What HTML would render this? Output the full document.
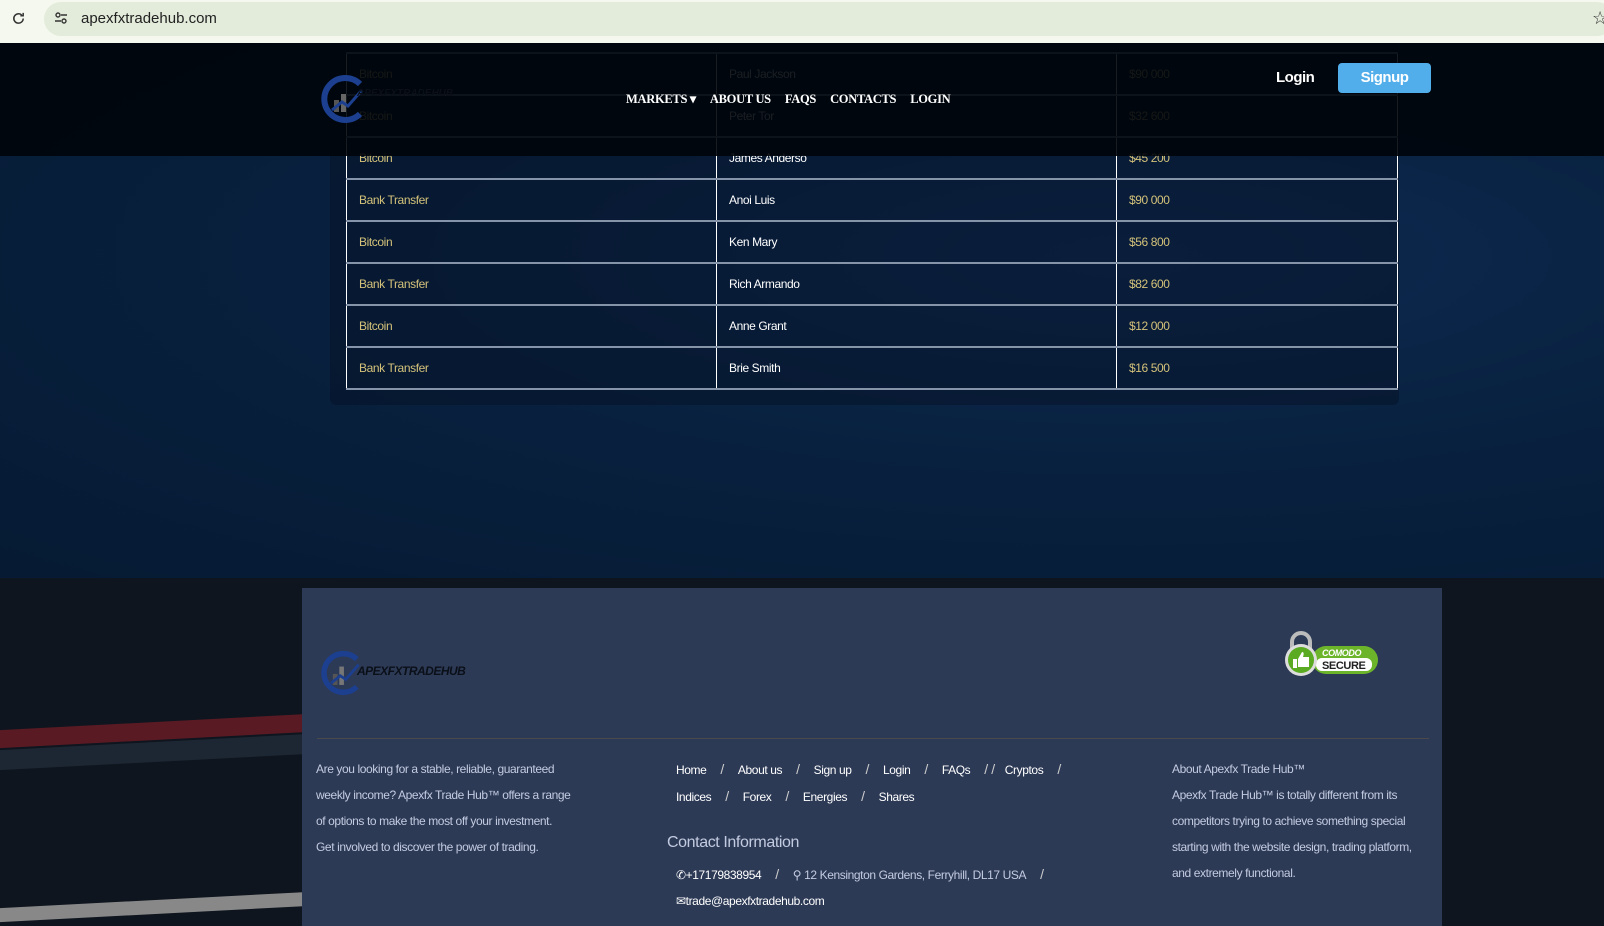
<!DOCTYPE html>
<html><head><meta charset="utf-8"><style>
*{margin:0;padding:0;box-sizing:border-box}
body{width:1604px;height:926px;overflow:hidden;position:relative;font-family:"Liberation Sans",sans-serif;background:#0b1220}
.bar{position:absolute;left:0;top:0;width:1604px;height:43px;background:#f5f8ee}
.pill{position:absolute;left:44px;top:2px;width:1570px;height:34px;background:#e3ecdb;border-radius:17px}
.url{position:absolute;left:81px;top:10px;font-size:15px;color:#222}
.hero{position:absolute;left:0;top:43px;width:1604px;height:535px;background:radial-gradient(ellipse at 70% 40%,#0e2a52 0%,#08213f 45%,#061a33 100%)}
.shadowbox{position:absolute;left:330px;top:43px;width:1069px;height:362px;background:rgba(5,18,38,.5);border-radius:6px}
table{position:absolute;left:346px;top:52px;width:1052px;border-collapse:collapse;font-size:12px;letter-spacing:-.4px}
td{height:42px;border-bottom:2px solid #8594a8;padding-left:12px;color:#fff}
td:first-child{color:#d4c27a;border-left:1px solid #fff;width:370px}
td:nth-child(2){border-left:1px solid #fff;width:400px}
td:nth-child(3){color:#d4c27a;border-left:1px solid #fff;border-right:1px solid #fff}
tr:first-child td{border-top:2px solid #8594a8}
.hdr{position:absolute;left:0;top:43px;width:1604px;height:113px;background:rgba(0,4,10,.9)}
.nav{position:absolute;top:91px;left:626px;font-family:"Liberation Serif",serif;font-weight:bold;font-size:12.5px;color:#fff;letter-spacing:-.3px}
.nav span{margin-right:14px}
.login{position:absolute;left:1276px;top:69px;color:#fff;font-size:15px;font-weight:bold;letter-spacing:-.5px}
.signup{position:absolute;left:1338px;top:63px;width:93px;height:30px;background:#52aeea;border-radius:4px;color:#fff;font-size:15px;font-weight:bold;text-align:center;line-height:30px;letter-spacing:-.5px}
.below{position:absolute;left:0;top:578px;width:1604px;height:348px;background:#0e151e}
.red{position:absolute;left:0;top:722px;width:310px;height:18px;background:#5a1a24;transform:skewY(-3deg)}
.grey{position:absolute;left:0;top:742px;width:310px;height:20px;background:#1d2733;transform:skewY(-3deg)}
.white{position:absolute;left:0;top:900px;width:310px;height:14px;background:#888;transform:skewY(-3deg)}
.foot{position:absolute;left:302px;top:588px;width:1140px;height:338px;background:#2d3a56;color:#c3cbe0;font-size:12px;letter-spacing:-.4px}
.hr{position:absolute;left:15px;top:150px;width:1112px;height:1px;background:#4a4a4a}
.p{position:absolute;line-height:26px}
.w{color:#fff}
.sl{margin:0 14px;color:#ccc;font-size:14px}
</style></head><body>
<div class="bar"><div class="pill"></div>
<svg style="position:absolute;left:11px;top:11px" width="15" height="15" viewBox="0 0 16 16"><path d="M13 8a5 5 0 1 1-1.5-3.6M13 2v3h-3" fill="none" stroke="#333" stroke-width="1.6"/></svg>
<svg style="position:absolute;left:54px;top:11px" width="14" height="14" viewBox="0 0 14 14"><circle cx="4" cy="4" r="2" fill="none" stroke="#333" stroke-width="1.4"/><path d="M7 4h6M1 10h6" stroke="#333" stroke-width="1.4"/><circle cx="10" cy="10" r="2" fill="none" stroke="#333" stroke-width="1.4"/></svg>
<div class="url">apexfxtradehub.com</div>
<div style="position:absolute;left:1592px;top:8px;font-size:18px;color:#333">☆</div></div>
<div class="hero"></div>
<div class="shadowbox"></div>
<table>
<tr><td>Bitcoin</td><td>Paul Jackson</td><td>$90 000</td></tr>
<tr><td>Bitcoin</td><td>Peter Tor</td><td>$32 600</td></tr>
<tr><td>Bitcoin</td><td>James Anderso</td><td>$45 200</td></tr>
<tr><td>Bank Transfer</td><td>Anoi Luis</td><td>$90 000</td></tr>
<tr><td>Bitcoin</td><td>Ken Mary</td><td>$56 800</td></tr>
<tr><td>Bank Transfer</td><td>Rich Armando</td><td>$82 600</td></tr>
<tr><td>Bitcoin</td><td>Anne Grant</td><td>$12 000</td></tr>
<tr><td>Bank Transfer</td><td>Brie Smith</td><td>$16 500</td></tr>
</table>
<div class="hdr"></div>
<svg style="position:absolute;left:320px;top:74px" width="50" height="50" viewBox="0 0 50 50"><path d="M40 10A21 21 0 1 0 40 40" fill="none" stroke="#1c3f8f" stroke-width="6"/><rect x="14" y="26" width="5" height="12" fill="#555"/><rect x="21" y="20" width="5" height="18" fill="#666"/><path d="M12 36l10-8 6 4 14-16" fill="none" stroke="#1c3f8f" stroke-width="3"/></svg>
<div style="position:absolute;left:357px;top:88px;font-size:10px;font-weight:bold;font-style:italic;color:#0a0f18">APEXFXTRADEHUB</div>
<div class="nav"><span>MARKETS ▾</span><span>ABOUT US</span><span>FAQS</span><span>CONTACTS</span><span>LOGIN</span></div>
<div class="login">Login</div>
<div class="signup">Signup</div>
<div class="below"></div>
<div class="red"></div><div class="grey"></div><div class="white"></div>
<div class="foot">
<svg style="position:absolute;left:18px;top:62px" width="46" height="46" viewBox="0 0 50 50"><path d="M40 10A21 21 0 1 0 40 40" fill="none" stroke="#1c3f8f" stroke-width="6"/><rect x="14" y="26" width="5" height="12" fill="#555"/><rect x="21" y="18" width="5" height="20" fill="#777"/><path d="M12 36l10-8 6 4 14-16" fill="none" stroke="#1c3f8f" stroke-width="3"/></svg>
<div style="position:absolute;left:55px;top:76px;font-size:12px;font-weight:bold;font-style:italic;color:#0a0f18;letter-spacing:-.5px">APEXFXTRADEHUB</div>
<svg style="position:absolute;left:980px;top:40px" width="100" height="56" viewBox="0 0 100 56"><path d="M10 22v-8a9 9 0 0 1 18 0v8" fill="none" stroke="#bbb" stroke-width="4"/><rect x="30" y="18" width="66" height="28" rx="14" fill="#6cb52a"/><rect x="34" y="30" width="56" height="13" rx="6" fill="#fff"/><text x="40" y="28" font-size="9" font-weight="bold" font-style="italic" fill="#fff" font-family="Liberation Sans">COMODO</text><text x="40" y="41" font-size="11" font-weight="bold" fill="#222" font-family="Liberation Sans">SECURE</text><circle cx="19" cy="32" r="16" fill="#ddd"/><circle cx="19" cy="32" r="13" fill="#5aab22"/><path d="M11 31h4v9h-4zM16 31l4-7c2 0 2 2 1 5h6v10h-11z" fill="#fff"/></svg>
<div class="hr"></div>
<div class="p" style="left:14px;top:168px;width:260px">Are you looking for a stable, reliable, guaranteed<br>weekly income? Apexfx Trade Hub™ offers a range<br>of options to make the most off your investment.<br>Get involved to discover the power of trading.</div>
<div class="p w" style="left:374px;top:168px">Home<span class="sl">/</span>About us<span class="sl">/</span>Sign up<span class="sl">/</span>Login<span class="sl">/</span>FAQs<span class="sl" style="margin-right:10px">/ /</span>Cryptos<span class="sl">/</span><br>Indices<span class="sl">/</span>Forex<span class="sl">/</span>Energies<span class="sl">/</span>Shares</div>
<div style="position:absolute;left:365px;top:246px;font-size:16px;color:#c3cbe0;letter-spacing:-.4px">Contact Information</div>
<div class="p w" style="left:374px;top:273px">✆+17179838954<span class="sl">/</span><span style="color:#c3cbe0">⚲ 12 Kensington Gardens, Ferryhill, DL17 USA</span><span class="sl">/</span><br>✉trade@apexfxtradehub.com</div>
<div class="p" style="left:870px;top:168px">About Apexfx Trade Hub™<br>Apexfx Trade Hub™ is totally different from its<br>competitors trying to achieve something special<br>starting with the website design, trading platform,<br>and extremely functional.</div>
</div>
</body></html>
